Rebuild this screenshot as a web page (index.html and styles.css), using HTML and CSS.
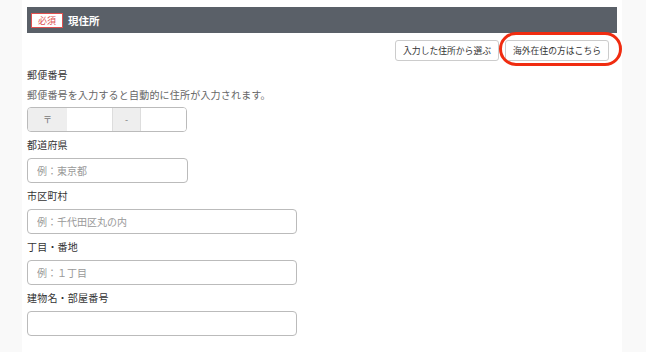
FILE: index.html
```html
<!DOCTYPE html>
<html lang="ja">
<head>
    <meta charset="UTF-8">
    <meta name="viewport" content="width=device-width, initial-scale=1.0">
    <title>現住所</title>
    <link rel="stylesheet" href="styles.css">
</head>
<body>
    <div class="page">
        <div class="section-head">
            <span class="required">必須</span>
            <span class="section-title">現住所</span>
        </div>

        <div class="actions">
            <button type="button" class="btn">入力した住所から選ぶ</button>
            <span class="highlight-wrap">
                <button type="button" class="btn">海外在住の方はこちら</button>
                <span class="highlight"></span>
            </span>
        </div>

        <form class="address-form">
            <div class="field first">
                <label>郵便番号</label>
                <p class="help">郵便番号を入力すると自動的に住所が入力されます。</p>
                <div class="zip-group">
                    <span class="addon mark">〒</span>
                    <input type="text" class="zip-part zip1">
                    <span class="addon dash">-</span>
                    <input type="text" class="zip-part zip2">
                </div>
            </div>
            <div class="field">
                <label>都道府県</label>
                <input type="text" class="text-input short" placeholder="例：東京都">
            </div>
            <div class="field">
                <label>市区町村</label>
                <input type="text" class="text-input" placeholder="例：千代田区丸の内">
            </div>
            <div class="field">
                <label>丁目・番地</label>
                <input type="text" class="text-input" placeholder="例：１丁目">
            </div>
            <div class="field">
                <label>建物名・部屋番号</label>
                <input type="text" class="text-input">
            </div>
        </form>
    </div>
</body>
</html>
```

FILE: styles.css
```css
*, *::before, *::after {
    margin: 0;
    padding: 0;
    box-sizing: border-box;
}
body {
    background: #f9f9f9;
    font-family: "Noto Sans CJK JP", "Noto Sans", sans-serif;
    color: #333;
    font-size: 10px;
}
.page {
    margin-left: 22px;
    width: 600px;
    min-height: 100vh;
    background: #fff;
    padding: 7px 5px 0;
}
.section-head {
    height: 26px;
    background: #5a6068;
    display: flex;
    align-items: center;
    padding-left: 4px;
}
.required {
    width: 32px;
    height: 15px;
    background: #fff;
    border: 1px solid #e0504f;
    color: #e0504f;
    font-size: 9px;
    line-height: 13px;
    text-align: center;
}
.section-title {
    color: #fff;
    font-weight: bold;
    font-size: 10.5px;
    margin-left: 5px;
}
.actions {
    display: flex;
    justify-content: flex-end;
    gap: 6px;
    margin: 7px 8px 5px 0;
}
.btn {
    height: 21px;
    padding: 0 7px;
    background: #fff;
    border: 1px solid #ccc;
    border-radius: 3px;
    font-family: inherit;
    font-size: 8.8px;
    color: #333;
}
.highlight-wrap {
    position: relative;
    display: flex;
}
/* red annotation ring */
.highlight {
    position: absolute;
    left: -6px;
    right: -13px;
    top: -8px;
    bottom: -5px;
    border: 3px solid #f02c10;
    border-radius: 17px;
}
.field {
    margin-top: 4px;
}
.field.first {
    margin-top: 0;
}
.field label {
    display: block;
    line-height: 18px;
    font-size: 10px;
    letter-spacing: 0.2px;
    margin-bottom: 4px;
}
.field.first label {
    margin-bottom: 2px;
}
.help {
    line-height: 18px;
    color: #666;
    letter-spacing: 0.2px;
    margin-bottom: 3px;
}
.zip-group {
    display: flex;
    width: 160px;
    height: 25px;
    border: 1px solid #bbb;
    border-radius: 4px;
    overflow: hidden;
}
.addon {
    background: #eee;
    color: #777;
    display: flex;
    align-items: center;
    justify-content: center;
    font-size: 9px;
}
.mark {
    width: 39px;
}
.dash {
    width: 29px;
    border-left: 1px solid #ddd;
    border-right: 1px solid #ddd;
}
.zip-part {
    border: none;
    outline: none;
    height: 100%;
}
.zip1 {
    width: 45px;
}
.zip2 {
    flex: 1;
    min-width: 0;
}
.text-input {
    display: block;
    width: 270px;
    height: 25px;
    border: 1px solid #bbb;
    border-radius: 4px;
    padding: 0 9px;
    font-family: inherit;
    font-size: 10px;
    outline: none;
}
.text-input.short {
    width: 161px;
}
.text-input::placeholder {
    color: #999;
}
```
